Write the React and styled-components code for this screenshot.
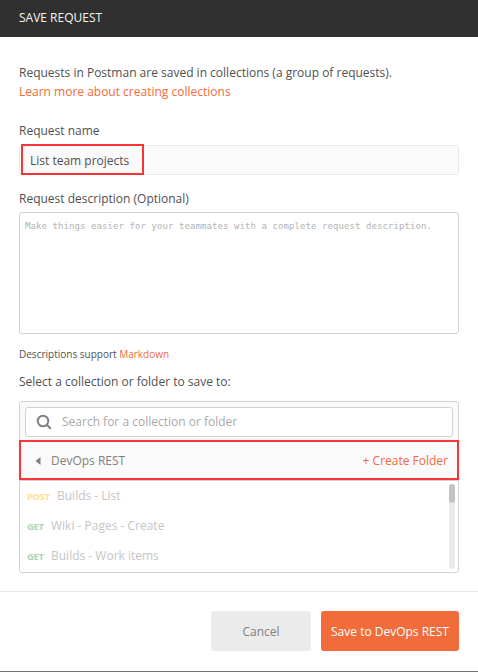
import React from "react";
import styled, { createGlobalStyle } from "styled-components";

const Global = createGlobalStyle`
  *, *::before, *::after { box-sizing: border-box; }
  body {
    margin: 0;
    background: #fff;
    font-family: "Open Sans", sans-serif;
    font-size: 12px;
    color: #505050;
  }
`;

const Dialog = styled.div`
  display: flex;
  flex-direction: column;
  width: 478px;
  height: 672px;
  background: #fff;
  border-bottom: 1px solid #717171;
  overflow: hidden;
`;

const Header = styled.header`
  display: flex;
  align-items: center;
  height: 37px;
  padding: 0 19px 2px;
  background: #303030;
  color: #f4f4f4;
`;

const Text = styled.span`
  white-space: nowrap;
  letter-spacing: ${(p) => p.$spacing || 0}px;
`;

const Body = styled.main`
  display: flex;
  flex-direction: column;
  height: 554px;
  padding: 26px 19px 0;
`;

const Intro = styled.div`
  display: flex;
  flex-direction: column;
  align-items: flex-start;
  line-height: 19px;
  height: 58px;
`;

const Link = styled.a`
  color: #f26b3a;
  white-space: nowrap;
`;

const Label = styled.label`
  height: ${(p) => p.$height}px;
  line-height: 19px;
`;

const NameField = styled.div`
  display: flex;
  height: 30px;
  margin-bottom: 14px;
  border: 1px solid #e8e8e8;
  border-radius: 3px;
  background: #fafafa;
`;

const NameHighlight = styled.div`
  display: flex;
  align-items: center;
  flex: none;
  width: 123px;
  height: 31px;
  margin: -2px 0 0 1px;
  padding: 2px 0 0 7px;
  border: 2px solid #f93434;
`;

const Description = styled.div`
  height: 122px;
  padding: 6px 5px;
  border: 1px solid #d2d2d2;
  border-radius: 3px;
  font: 9px/14px "DejaVu Sans Mono", monospace;
  color: #b3b3b3;
`;

const Hint = styled.div`
  height: 38px;
  padding-top: 12px;
  font-size: 10px;
  line-height: 16px;
`;

const Picker = styled.section`
  display: flex;
  flex-direction: column;
  height: 172px;
  border: 1px solid #d2d2d2;
  border-radius: 3px;
  background: #fafafa;
`;

const Search = styled.div`
  display: flex;
  align-items: center;
  gap: 10px;
  flex: none;
  height: 30px;
  margin: 5px 5px 3px;
  padding: 0 10px 1px;
  border: 1px solid #d2d2d2;
  border-radius: 3px;
  background: #fff;
  color: #a9a9a9;
`;

const FolderRow = styled.div`
  display: flex;
  align-items: center;
  flex: none;
  height: 40px;
  margin: 0 -1px;
  padding: 1px 9px 0 14px;
  border: 2px solid #f93434;
  color: #808080;
`;

const FolderName = styled.div`
  flex: 1;
  padding-left: 10px;
`;

const List = styled.div`
  display: flex;
  justify-content: space-between;
  flex: none;
  height: 92px;
  padding: 0 3px 0 7px;
  border-top: 1px solid #d2d2d2;
  border-radius: 0 0 3px 3px;
  background: #fff;
`;

const Requests = styled.div`
  display: flex;
  flex-direction: column;
`;

const Request = styled.div`
  display: flex;
  align-items: baseline;
  height: 30px;
  padding-top: 6px;
  color: #c5c5c5;
`;

const Method = styled.span`
  width: ${(p) => (p.$post ? 30 : 24)}px;
  font-size: 9.5px;
  font-weight: 700;
  letter-spacing: -0.35px;
  color: ${(p) => (p.$post ? "#ffdf91" : "#a6d8b8")};
`;

const Track = styled.div`
  width: 6px;
  height: 85px;
  margin-top: 3px;
  border-radius: 3px;
  background: #ebebeb;
`;

const Thumb = styled.div`
  height: 19px;
  border-radius: 3px;
  background: #c3c3c3;
`;

const Footer = styled.footer`
  display: flex;
  justify-content: flex-end;
  gap: 10px;
  height: 80px;
  padding: 19px 19px 0;
  border-top: 1px solid #e8e8e8;
`;

const Button = styled.button`
  width: ${(p) => (p.$primary ? 138 : 100)}px;
  height: 40px;
  padding: 1px 0 0;
  border: 0;
  border-radius: 3px;
  font: inherit;
  background: ${(p) => (p.$primary ? "#f26b3a" : "#ebebeb")};
  color: ${(p) => (p.$primary ? "#fff" : "#808080")};
`;

const requests = [
  { method: "POST", name: "Builds - List" },
  { method: "GET", name: "Wiki - Pages - Create" },
  { method: "GET", name: "Builds - Work items" },
];

function SearchIcon() {
  return (
    <svg width="16" height="16" viewBox="0 0 16 16" fill="none" stroke="#808080" strokeWidth="2">
      <circle cx="7" cy="7" r="5.3" />
      <path d="M10.8 10.8 L14.8 14.8" />
    </svg>
  );
}

function BackIcon() {
  return (
    <svg width="6" height="8" viewBox="0 0 6 8">
      <path d="M5.5 0 V8 L0.5 4 Z" fill="#808080" />
    </svg>
  );
}

export default function App() {
  return (
    <>
      <Global />
      <Dialog>
        <Header><Text>SAVE REQUEST</Text></Header>
        <Body>
          <Intro>
            <Text>Requests in Postman are saved in collections (a group of requests).</Text>
            <Link>Learn more about creating collections</Link>
          </Intro>
          <Label $height={24}><Text>Request name</Text></Label>
          <NameField>
            <NameHighlight><Text>List team projects</Text></NameHighlight>
          </NameField>
          <Label $height={23}><Text>Request description (Optional)</Text></Label>
          <Description>
            <Text $spacing={0.08}>Make things easier for your teammates with a complete request description.</Text>
          </Description>
          <Hint>
            <Text>Descriptions support <Link>Markdown</Link></Text>
          </Hint>
          <Label $height={29}><Text>Select a collection or folder to save to:</Text></Label>
          <Picker>
            <Search>
              <SearchIcon />
              <Text>Search for a collection or folder</Text>
            </Search>
            <FolderRow>
              <BackIcon />
              <FolderName><Text>DevOps REST</Text></FolderName>
              <Link>+ Create Folder</Link>
            </FolderRow>
            <List>
              <Requests>
                {requests.map((r) => (
                  <Request key={r.name}>
                    <Method $post={r.method === "POST"}>{r.method}</Method>
                    <Text>{r.name}</Text>
                  </Request>
                ))}
              </Requests>
              <Track><Thumb /></Track>
            </List>
          </Picker>
        </Body>
        <Footer>
          <Button><Text>Cancel</Text></Button>
          <Button $primary><Text>Save to DevOps REST</Text></Button>
        </Footer>
      </Dialog>
    </>
  );
}
